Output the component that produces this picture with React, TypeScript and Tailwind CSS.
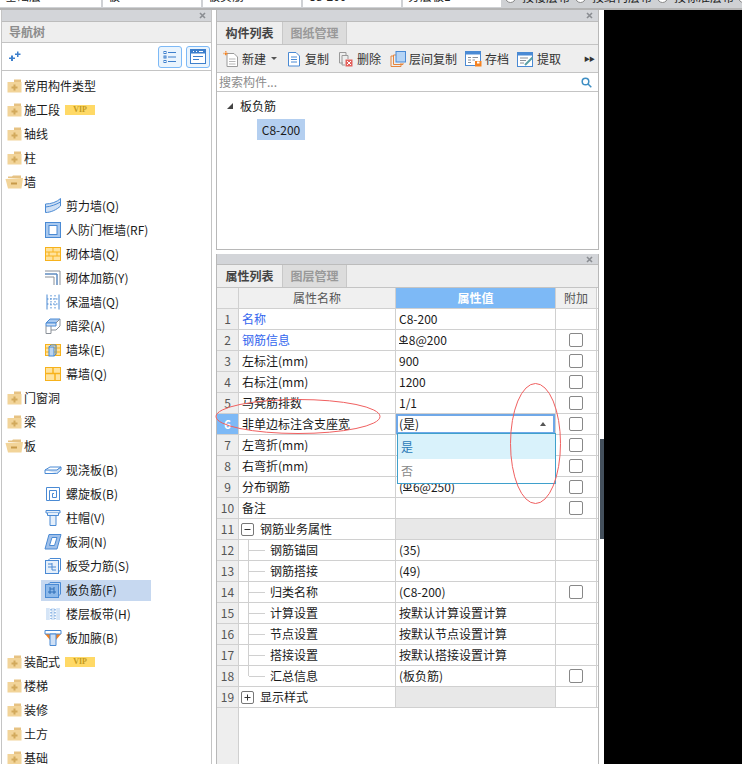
import type { ReactNode } from 'react';

const font = 'font-["Noto_Sans_CJK_SC","Microsoft_YaHei",sans-serif]';

function FolderIcon({ open }: { open?: boolean }) {
  if (open) {
    return (
      <svg width="18" height="14" viewBox="0 0 18 14" className="shrink-0">
        <path d="M3 3 L3 1.5 L7 1.5 L8 0.5 L16 0.5 L16 3 Z" fill="#e6c283" />
        <path d="M0.5 4 L16 3 L18 3 L16.5 13.5 L3 13.5 Z" fill="#f2d499" />
        <rect x="6" y="7.5" width="6" height="2" fill="#c79a4a" />
      </svg>
    );
  }
  return (
    <svg width="15" height="14" viewBox="0 0 15 14" className="shrink-0">
      <path d="M7 0.5 L14 0.5 L14 3 L7 3 Z" fill="#e6c283" />
      <rect x="0.5" y="3" width="14" height="10.5" fill="#f2d499" />
      <path d="M6.5 5.5 H8.5 V7.5 H10.5 V9.5 H8.5 V11.5 H6.5 V9.5 H4.5 V7.5 H6.5 Z" fill="#d2a95c" />
    </svg>
  );
}

function Ico({ children }: { children: ReactNode }) {
  return (
    <svg width="18" height="18" viewBox="0 0 18 18" fill="none" className="shrink-0">
      {children}
    </svg>
  );
}

const blue = '#4a8ad4';
const gold = '#f7b21c';

const treeIcons: Record<string, ReactNode> = {
  shear: (
    <Ico>
      <path d="M1.5 7 C7 7 13 5 16.5 1.5 V9 C13 12.5 7 15.5 1.5 15.5 Z" fill="#cfe0f5" stroke={blue} />
      <path d="M1.5 10 C7 9.5 12 7.5 16.5 5" stroke={blue} />
    </Ico>
  ),
  door: (
    <Ico>
      <rect x="1.5" y="1.5" width="15" height="15" fill="#a9c9ef" stroke={blue} />
      <rect x="5" y="4.5" width="8" height="9" fill="#fff" stroke={blue} />
    </Ico>
  ),
  brick: (
    <Ico>
      <rect x="1.5" y="2.5" width="15" height="13" fill="#ffe29c" stroke={gold} />
      <path d="M1.5 7 H16.5 M1.5 11 H16.5 M9 2.5 V7 M5 7 V11 M13 7 V11 M9 11 V15.5" stroke={gold} />
    </Ico>
  ),
  rebar: (
    <Ico>
      <path d="M1 2 H16 V16 M1 5 H13 V16 M1 8 H10 V16" stroke="#8a9098" />
      <path d="M1 5 H13 V16" stroke={blue} />
    </Ico>
  ),
  insul: (
    <Ico>
      <path d="M3 1.5 V16.5 M15 1.5 V16.5" stroke={blue} />
      <path d="M7 2 V16 M11 2 V16 M3 6 H15 M3 11 H15" stroke={blue} strokeDasharray="1.5 1.5" />
    </Ico>
  ),
  beam: (
    <Ico>
      <path d="M2 6 L6 2 H16 L12 6 Z" fill="#a9c9ef" stroke={blue} />
      <path d="M2 6 H12 V9 H2 Z" fill="#cfe0f5" stroke={blue} />
      <path d="M2 9 V16.5 H7 V9 M12 6 L16 2 V9 L12 13 M7 13 H12" stroke="#8a9098" />
    </Ico>
  ),
  pier: (
    <Ico>
      <rect x="1.5" y="3.5" width="15" height="11" fill="#ffe29c" stroke={gold} />
      <path d="M1.5 7 H16.5 M1.5 11 H16.5 M12 3.5 V14.5" stroke={gold} />
      <rect x="5" y="6" width="5" height="9" fill="#bcd5f2" stroke={blue} />
      <path d="M5 6 L7 4 H12 V13 L10 15" stroke={blue} />
    </Ico>
  ),
  curtain: (
    <Ico>
      <rect x="1.5" y="2.5" width="15" height="13" fill="#ffe29c" stroke={gold} />
      <path d="M1.5 8.5 H16.5 M9 2.5 V8.5 M11 8.5 V15.5" stroke={gold} strokeWidth="1.5" />
    </Ico>
  ),
  cast: (
    <Ico>
      <path d="M1 9 L6 6 H17 L13 9 V12.5 H1 Z" fill="#fff" stroke={blue} />
      <path d="M1 9 H13 L17 6 V9 L13 12.5" fill="#cfe0f5" stroke={blue} />
    </Ico>
  ),
  spiral: (
    <Ico>
      <path d="M2.5 2.5 H15.5 V15.5 H5.5 V5.5 H12.5 V12.5 H8.5 V8.5 H10" stroke={blue} />
      <path d="M2.5 2.5 V15.5 H5.5" stroke={blue} />
    </Ico>
  ),
  cap: (
    <Ico>
      <path d="M2 1.5 H16 V4 H2 Z" fill="#e5effa" stroke={blue} />
      <path d="M3.5 4 V6.5 H14.5 V4 M6 6.5 H12 V16.5 H6 Z" fill="#e5effa" stroke={blue} />
    </Ico>
  ),
  hole: (
    <Ico>
      <path d="M5 1.5 H17 L13 16 H1 Z" fill="#9fc0ea" stroke={blue} />
      <path d="M8 4.5 H13 L10.5 12.5 H5.5 Z" fill="#fff" stroke={blue} />
    </Ico>
  ),
  slabBar: (
    <Ico>
      <path d="M4 3.5 L6 1.5 H16.5 V13 L14 15.5" fill="#fff" stroke={blue} />
      <rect x="1.5" y="3.5" width="13" height="13" fill="#e5effa" stroke={blue} />
      <path d="M4 10 H12 M8 6 V13 M4 7 H8 M8 13 H12" stroke={blue} />
    </Ico>
  ),
  slabNeg: (
    <Ico>
      <path d="M4 3.5 L6 1.5 H16.5 V13 L14 15.5" fill="#bcd5f2" stroke={blue} />
      <rect x="1.5" y="3.5" width="13" height="13" fill="#8db9ea" stroke={blue} />
      <path d="M4 11 H12 M6 6 V13 M10 6 V13 M6 8 H10" stroke="#2f6fb8" />
    </Ico>
  ),
  band: (
    <Ico>
      <rect x="2" y="3" width="14" height="12" fill="#d5e5f7" />
      <path d="M6.5 3 V15 M11.5 3 V15" stroke="#fff" strokeWidth="1.5" />
      <path d="M7 4 V14 M11 4 V14" stroke={blue} strokeDasharray="1.5 1.5" />
    </Ico>
  ),
  haunch: (
    <Ico>
      <path d="M6 5 L1 5 L6 11 Z M12 5 L17 5 L12 11 Z" fill="#f58220" />
      <path d="M1 1.5 H17 V5 H1 Z" fill="#fff" stroke={blue} />
      <path d="M6 5 H12 V16.5 H6 Z" fill="#cfe0f5" stroke={blue} />
    </Ico>
  ),
};

type TreeItem = { label: string; open?: boolean; vip?: boolean; icon?: string; selected?: boolean };

const tree: TreeItem[] = [
  { label: '常用构件类型' },
  { label: '施工段', vip: true },
  { label: '轴线' },
  { label: '柱' },
  { label: '墙', open: true },
  { label: '剪力墙(Q)', icon: 'shear' },
  { label: '人防门框墙(RF)', icon: 'door' },
  { label: '砌体墙(Q)', icon: 'brick' },
  { label: '砌体加筋(Y)', icon: 'rebar' },
  { label: '保温墙(Q)', icon: 'insul' },
  { label: '暗梁(A)', icon: 'beam' },
  { label: '墙垛(E)', icon: 'pier' },
  { label: '幕墙(Q)', icon: 'curtain' },
  { label: '门窗洞' },
  { label: '梁' },
  { label: '板', open: true },
  { label: '现浇板(B)', icon: 'cast' },
  { label: '螺旋板(B)', icon: 'spiral' },
  { label: '柱帽(V)', icon: 'cap' },
  { label: '板洞(N)', icon: 'hole' },
  { label: '板受力筋(S)', icon: 'slabBar' },
  { label: '板负筋(F)', icon: 'slabNeg', selected: true },
  { label: '楼层板带(H)', icon: 'band' },
  { label: '板加腋(B)', icon: 'haunch' },
  { label: '装配式', vip: true },
  { label: '楼梯' },
  { label: '装修' },
  { label: '土方' },
  { label: '基础' },
];

function VipBadge() {
  return (
    <span className='ml-[5px] flex h-[10px] w-[30px] items-center justify-center bg-[#ffd966] font-["Liberation_Serif",serif] text-[8px] font-bold text-[#c49a20]'>
      VIP
    </span>
  );
}

function TitleBar({ short }: { short?: boolean }) {
  return (
    <div className={`flex shrink-0 items-center justify-end border-b border-[#bcbcbc] bg-[#d3d5d9] pr-[5px] ${short ? 'h-[11px]' : 'h-[12px]'}`}>
      <svg width="7" height="7" viewBox="0 0 7 7">
        <path d="M1 1 L6 6 M6 1 L1 6" stroke="#8a8d92" strokeWidth="1.6" />
      </svg>
    </div>
  );
}

function Tabs({ active, other }: { active: string; other: string }) {
  return (
    <div className="flex h-[23px] shrink-0 border-b border-[#c4c4c4] bg-[#eeeeee] text-[12px] font-bold">
      <div className="flex w-[65px] items-center justify-center text-[#444]">{active}</div>
      <div className="flex w-[65px] items-center justify-center border-x border-[#c8c8c8] bg-[#dcdcdc] text-[#999]">{other}</div>
    </div>
  );
}

function NavPanel() {
  return (
    <div className="ml-[1px] flex w-[211px] shrink-0 flex-col overflow-hidden border-r border-l border-[#c4c4c4]">
      <TitleBar />
      <div className="flex h-[21px] shrink-0 items-center border-b border-[#c4c4c4] bg-[#eeeeee] pl-[7px] text-[12px] font-bold text-[#8c8c8c]">
        导航树
      </div>
      <div className="flex h-[28px] shrink-0 items-center justify-between border-b border-[#c4c4c4] pr-[1px] pl-[6px]">
        <svg width="13" height="11" viewBox="0 0 13 11">
          <path d="M3 4.5 H5 V6.5 H7 V8 H5 V10 H3 V8 H1 V6.5 H3 Z M9 0.5 H10.5 V2.5 H12.5 V4 H10.5 V6 H9 V4 H7 V2.5 H9 Z" fill="#3d7fcc" />
        </svg>
        <div className="flex gap-[4px]">
          <div className="flex h-[22px] w-[24px] items-center justify-center rounded-[3px] border border-[#7db9f6] bg-[#eaf4fd]">
            <svg width="14" height="14" viewBox="0 0 14 14" fill="none" stroke="#3d7fcc">
              <rect x="1" y="1.5" width="2" height="2" />
              <rect x="1" y="6" width="2" height="2" />
              <rect x="1" y="10.5" width="2" height="2" />
              <path d="M5 2.5 H13 M5 7 H13 M5 11.5 H13" />
            </svg>
          </div>
          <div className="flex h-[22px] w-[24px] items-center justify-center rounded-[3px] border border-[#7db9f6] bg-[#eaf4fd]">
            <svg width="16" height="15" viewBox="0 0 16 15" fill="none">
              <rect x="0.5" y="0.5" width="15" height="14" fill="#fff" stroke="#3d7fcc" />
              <rect x="0.5" y="0.5" width="15" height="4" fill="#3d7fcc" />
              <path d="M3 7.5 H13 M3 10.5 H9" stroke="#3d7fcc" />
              <path d="M3 2.5 H4 M6 2.5 H7 M9 2.5 H13" stroke="#fff" />
            </svg>
          </div>
        </div>
      </div>
      <div className="flex flex-col pt-[3px] text-[12px] text-[#1a1a1a]">
        {tree.map((item) =>
          item.icon ? (
            <div key={item.label} className="flex h-[24px] shrink-0 items-center pl-[39px]">
              <div className={`flex h-[21px] items-center pl-[3px] ${item.selected ? 'w-[110px] bg-[#c6d8f0]' : ''}`}>
                {treeIcons[item.icon]}
                <span className="ml-[4px]">{item.label}</span>
              </div>
            </div>
          ) : (
            <div key={item.label} className="flex h-[24px] shrink-0 items-center pl-[2px]">
              <div className="flex w-[20px] justify-center">
                <FolderIcon open={item.open} />
              </div>
              <span>{item.label}</span>
              {item.vip && <VipBadge />}
            </div>
          ),
        )}
      </div>
    </div>
  );
}

const toolIcons: Record<string, ReactNode> = {
  create: (
    <svg width="16" height="16" viewBox="0 0 16 16" fill="none">
      <path d="M4 2.5 H11 L14.5 6 V15.5 H4 Z" fill="#fff" stroke="#9a9a9a" />
      <path d="M6 8 H12.5 M6 10.5 H12.5 M6 13 H12.5" stroke="#b5b5b5" />
      <path d="M0.5 2.5 H5 M2.8 0.3 V4.8" stroke="#f58220" strokeWidth="1.5" strokeDasharray="1 0.5" />
    </svg>
  ),
  copy: (
    <svg width="14" height="16" viewBox="0 0 14 16" fill="none">
      <path d="M1.5 1.5 H9 L12.5 5 V15 H1.5 Z" fill="#fff" stroke={blue} />
      <path d="M4 6 H10 M4 8.5 H10 M4 11 H10" stroke={blue} />
    </svg>
  ),
  del: (
    <svg width="16" height="16" viewBox="0 0 16 16" fill="none">
      <path d="M1.5 1.5 H8 V4 M1.5 1.5 V12 H5" stroke="#9a9a9a" />
      <path d="M4 4.5 H10 V8 M4 4.5 V14 H7" stroke="#9a9a9a" />
      <rect x="7.5" y="8.5" width="7" height="7" fill="#e2605c" />
      <path d="M9 10 L13 14 M13 10 L9 14" stroke="#fff" />
    </svg>
  ),
  floor: (
    <svg width="16" height="16" viewBox="0 0 16 16" fill="none">
      <path d="M4 5 H1 V15.5 H11 V12" stroke="#e5853d" />
      <path d="M6 4 H3.5 V13.5 H13 V12" stroke="#e5853d" />
      <rect x="6" y="0.5" width="9.5" height="10.5" fill="#b5d4f5" stroke={blue} />
    </svg>
  ),
  save: (
    <svg width="17" height="16" viewBox="0 0 17 16" fill="none">
      <rect x="0.5" y="0.5" width="15" height="14" fill="#fff" stroke={blue} />
      <rect x="0.5" y="0.5" width="15" height="3" fill={blue} />
      <path d="M3 6.5 H6 M3 9 H6 M3 11.5 H6 M7.5 6.5 H13 M7.5 9 H10" stroke="#8a9098" />
      <rect x="10" y="10" width="6.5" height="5.5" fill="#f58220" />
      <rect x="12" y="10.5" width="2.5" height="2" fill="#fff" />
    </svg>
  ),
  extract: (
    <svg width="17" height="16" viewBox="0 0 17 16" fill="none">
      <rect x="0.5" y="1.5" width="15" height="14" fill="#fff" stroke={blue} />
      <rect x="0.5" y="1.5" width="15" height="3" fill={blue} />
      <path d="M3 7 H11 M3 9.5 H9 M3 12 H7" stroke="#8a9098" />
      <path d="M8 14 L15.5 6.5" stroke="#5aa0a8" strokeWidth="2" />
    </svg>
  ),
};

const tools = [
  { key: 'copy', label: '复制', cls: 'ml-[10px] gap-[4px]' },
  { key: 'del', label: '删除', cls: 'ml-[9px] gap-[3px]' },
  { key: 'floor', label: '层间复制', cls: 'ml-[9px] gap-[3px]' },
  { key: 'save', label: '存档', cls: 'ml-[8px] gap-[3px]' },
  { key: 'extract', label: '提取', cls: 'ml-[8px] gap-[3px]' },
];

function ComponentPanel() {
  return (
    <div className="flex h-[240px] shrink-0 flex-col border-x border-b border-[#b8b8b8]">
      <TitleBar />
      <Tabs active="构件列表" other="图纸管理" />
      <div className="flex h-[28px] shrink-0 items-center border-b border-[#c4c4c4] bg-[#eeeeee] pl-[6px] text-[12px] text-[#333]">
        {toolIcons.create}
        <span className="ml-[3px]">新建</span>
        <span className="ml-[5px] h-0 w-0 border-x-[3px] border-t-[3px] border-x-transparent border-t-[#555]" />
        {tools.map((t) => (
          <div key={t.key} className={`flex items-center ${t.cls}`}>
            {toolIcons[t.key]}
            <span>{t.label}</span>
          </div>
        ))}
        <span className="mr-[4px] ml-auto text-[6px] tracking-[-1px] text-[#333]">▶▶</span>
      </div>
      <div className="flex h-[19px] shrink-0 items-center justify-between border-b border-[#c4c4c4] pr-[6px] pl-[2px] text-[12px] text-[#8c8c8c]">
        <span>搜索构件...</span>
        <svg width="11" height="11" viewBox="0 0 11 11" fill="none" stroke="#3f8fc4" strokeWidth="1.5">
          <circle cx="4.5" cy="4.5" r="3.3" />
          <path d="M7 7 L10.3 10.3" />
        </svg>
      </div>
      <div className="flex flex-1 flex-col pt-[3px] pl-[10px] text-[12px] text-[#1a1a1a]">
        <div className="flex h-[21px] items-center">
          <svg width="6" height="6" viewBox="0 0 6 6">
            <path d="M6 0 V6 H0 Z" fill="#444" />
          </svg>
          <span className="ml-[7px]">板负筋</span>
        </div>
        <div className="mt-[3px] ml-[30px] flex h-[21px] w-[48px] items-center justify-center bg-[#b4cff0]">C8-200</div>
      </div>
    </div>
  );
}

function Rebar({ children }: { children: string }) {
  return (
    <span className="inline-flex items-center">
      <span className="mr-[1px] mb-[3px] border-b border-[#222] text-[11px] leading-[9px]">Φ</span>
      {children}
    </span>
  );
}

type Row = {
  name: string;
  value?: ReactNode;
  blue?: boolean;
  check?: boolean;
  child?: boolean;
  last?: boolean;
  group?: '+' | '-';
  active?: boolean;
};

const rows: Row[] = [
  { name: '名称', value: 'C8-200', blue: true },
  { name: '钢筋信息', value: <Rebar>8@200</Rebar>, blue: true, check: true },
  { name: '左标注(mm)', value: '900', check: true },
  { name: '右标注(mm)', value: '1200', check: true },
  { name: '马凳筋排数', value: '1/1', check: true },
  { name: '非单边标注含支座宽', value: '(是)', check: true, active: true },
  { name: '左弯折(mm)', check: true },
  { name: '右弯折(mm)', check: true },
  { name: '分布钢筋', value: <>(<Rebar>6@250</Rebar>)</>, check: true },
  { name: '备注', check: true },
  { name: '钢筋业务属性', group: '-' },
  { name: '钢筋锚固', value: '(35)', child: true },
  { name: '钢筋搭接', value: '(49)', child: true },
  { name: '归类名称', value: '(C8-200)', child: true, check: true },
  { name: '计算设置', value: '按默认计算设置计算', child: true },
  { name: '节点设置', value: '按默认节点设置计算', child: true },
  { name: '搭接设置', value: '按默认搭接设置计算', child: true },
  { name: '汇总信息', value: '(板负筋)', child: true, check: true, last: true },
  { name: '显示样式', group: '+' },
];

function Expander({ sign }: { sign: '+' | '-' }) {
  return (
    <span className="flex h-[13px] w-[13px] items-center justify-center rounded-[2px] border border-[#777]">
      <svg width="7" height="7" viewBox="0 0 7 7" stroke="#333">
        <path d="M0.5 3.5 H6.5" />
        {sign === '+' && <path d="M3.5 0.5 V6.5" />}
      </svg>
    </span>
  );
}

function PropRow({ row, index }: { row: Row; index: number }) {
  return (
    <div className="flex h-[21px] shrink-0 border-b border-[#d0d0d0] text-[12px] text-[#1a1a1a]">
      <div
        className={`flex w-[22px] shrink-0 items-center justify-center border-r border-[#d0d0d0] text-[#555] ${
          row.active ? 'bg-[#7db9f6] font-bold text-white' : 'bg-[#eeeeee]'
        }`}
      >
        {index}
      </div>
      <div
        className={`flex w-[157px] shrink-0 items-center border-r border-[#d0d0d0] ${
          row.child ? 'pl-[9px]' : row.group ? 'pl-[2px]' : 'pl-[3px]'
        }`}
      >
        {row.group && <Expander sign={row.group} />}
        {row.child && (
          <>
            <div className={`w-px self-stretch bg-[#d0d0d0] ${row.last ? 'mb-[10px]' : ''}`} />
            <div className="h-px w-[16px] bg-[#d0d0d0]" />
          </>
        )}
        <span className={`${row.child ? 'ml-[5px]' : row.group ? 'ml-[6px]' : ''} ${row.blue ? 'text-[#3366ee]' : ''}`}>{row.name}</span>
      </div>
      <div className={`w-[160px] shrink-0 border-r border-[#d0d0d0] ${row.group ? 'bg-[#e8e8e8]' : ''}`}>
        {row.active ? (
          <div className="flex h-[20px] items-center justify-between border-2 border-[#6fa8e8] pr-[7px] pl-[1px]">
            <span>{row.value}</span>
            <span className="h-0 w-0 border-x-[3px] border-b-[4px] border-x-transparent border-b-[#555]" />
          </div>
        ) : (
          <div className="flex h-full items-center pl-[3px]">{row.value}</div>
        )}
      </div>
      <div className="flex w-[41px] shrink-0 items-center justify-center border-r border-[#d0d0d0]">
        {row.check && <span className="h-[14px] w-[14px] rounded-[2px] border border-[#888] bg-white" />}
      </div>
    </div>
  );
}

function PropertyPanel() {
  return (
    <div className="mt-[4px] flex min-h-0 flex-1 flex-col border-x border-[#b8b8b8]">
      <TitleBar short />
      <Tabs active="属性列表" other="图层管理" />
      <div className="relative flex min-h-0 flex-1 flex-col">
        <div className="flex h-[21px] shrink-0 border-b border-[#d0d0d0] text-[12px] text-[#555]">
          <div className="w-[22px] shrink-0 border-r border-[#d0d0d0] bg-[#f0f0f0]" />
          <div className="flex w-[157px] shrink-0 items-center justify-center border-r border-[#d0d0d0] bg-[#f0f0f0]">属性名称</div>
          <div className="flex w-[160px] shrink-0 items-center justify-center border-r border-[#d0d0d0] bg-[#7db9f6] font-bold text-white">属性值</div>
          <div className="flex w-[41px] shrink-0 items-center justify-center border-r border-[#d0d0d0] bg-[#f0f0f0]">附加</div>
        </div>
        {rows.map((row, i) => (
          <PropRow key={row.name} row={row} index={i + 1} />
        ))}
        <div className="flex-1">
          <div className="h-full w-[22px] border-r border-[#d0d0d0] bg-[#eeeeee]" />
        </div>
        {/* dropdown for row 6 */}
        <div className="absolute top-[145px] left-[180px] flex h-[51px] w-[159px] flex-col border border-[#3fa0cc] bg-white text-[12px]">
          <div className="flex h-[25px] items-center bg-[#d9f2fb] pl-[3px] text-[#2a7ab8]">是</div>
          <div className="flex h-[24px] items-center pl-[3px] text-[#888]">否</div>
        </div>
      </div>
    </div>
  );
}

function TopStrip() {
  const cells = ['基础层', '板', '板负筋', 'C8-200', '分层板1'];
  const radios = [
    { label: '按楼层布', cls: 'w-[70px]' },
    { label: '按结构层布', cls: 'w-[82px]' },
    { label: '按标准层布', cls: 'w-[81px]' },
    { label: '按', cls: 'w-[10px]' },
  ];
  return (
    <div className="flex h-[10px] shrink-0 overflow-hidden border-b-2 border-[#b4b4b4] bg-[#cfd1d4] text-[12px] text-[#222]">
      <div className="flex gap-[2px]">
        {cells.map((c) => (
          <div key={c} className="-mt-[13px] h-[20px] w-[98px] bg-white pl-[5px] leading-[17px] first:w-[101px]">
            {c}
          </div>
        ))}
      </div>
      <div className="ml-[4px] flex">
        {radios.map((r) => (
          <div key={r.label} className={`-mt-[12px] flex h-[17px] shrink-0 items-center gap-[6px] overflow-hidden ${r.cls}`}>
            <span className="h-[13px] w-[11px] shrink-0 rounded-full border border-[#888] bg-white" />
            <span className="whitespace-nowrap">{r.label}</span>
          </div>
        ))}
      </div>
    </div>
  );
}

export default function App() {
  return (
    <div className={`relative flex h-[764px] w-[742px] flex-col overflow-hidden bg-white ${font}`}>
      <TopStrip />
      <div className="flex min-h-0 flex-1">
        <NavPanel />
        <div className="ml-[4px] flex w-[383px] shrink-0 flex-col">
          <ComponentPanel />
          <PropertyPanel />
        </div>
        <div className="ml-[1px] w-[4px] shrink-0 pt-[429px]">
          <div className="h-[100px] bg-[#44505c]" />
        </div>
        <div className="flex-1 bg-black" />
      </div>
      {/* red marks drawn over the screenshot */}
      <svg className="absolute top-[398px] left-[214px]" width="168" height="37" fill="none">
        <ellipse cx="84" cy="18.5" rx="82" ry="17" stroke="#f06060" />
      </svg>
      <svg className="absolute top-[382px] left-[509px]" width="53" height="123" fill="none">
        <ellipse cx="26.5" cy="61.5" rx="25" ry="60" stroke="#f06060" />
      </svg>
    </div>
  );
}
